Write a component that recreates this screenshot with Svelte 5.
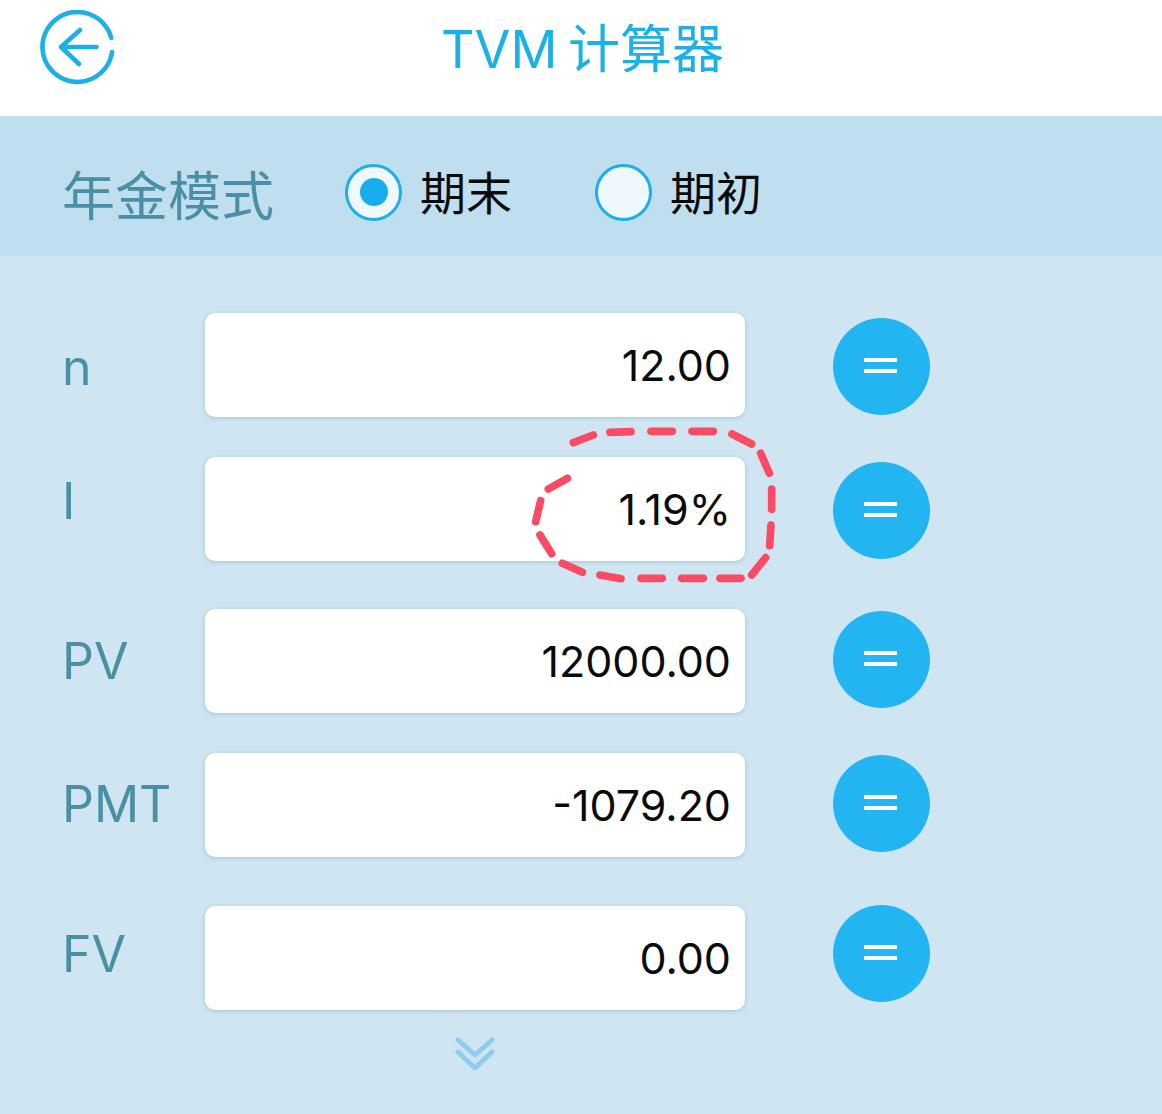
<script>
    // label / button nudges and the gap above each row, read off the reference
    const rows = [
        { label: "n", value: "12.00", nudge: 2, btn: 1, gap: 57 },
        { label: "I", value: "1.19%", nudge: -8, btn: 1, gap: 40 },
        { label: "PV", value: "12000.00", nudge: 0, btn: -2, gap: 48 },
        { label: "PMT", value: "-1079.20", nudge: -1, btn: -2, gap: 40 },
        { label: "FV", value: "0.00", nudge: -4, btn: -5, gap: 49 },
    ];

    // hand-traced dashes of the red annotation (viewBox units)
    const dashes = [
        [160, 98, 220, 75], [270, 67, 333, 65], [393, 64, 457, 64], [516, 64, 580, 64],
        [636, 72, 695, 102], [722, 130, 748, 190], [755, 237, 755, 298], [753, 345, 749, 407],
        [737, 443, 695, 495], [663, 505, 600, 505], [550, 505, 485, 505], [427, 505, 363, 505],
        [303, 506, 240, 495], [187, 487, 127, 460], [95, 431, 60, 375], [47, 335, 62, 272],
        [85, 237, 142, 205],
    ];
</script>

<div class="page">
    <header class="header">
        <svg class="back" viewBox="0 0 76 76" fill="none" aria-hidden="true">
            <path d="M72.3 28 A35 35 0 1 0 73.1 42" stroke="#1cb0e8" stroke-width="4.6" stroke-linecap="round" />
            <path d="M41 20 L22 37 L40 54 M22 37 H57.5" stroke="#1cb0e8" stroke-width="4.6" stroke-linecap="round" stroke-linejoin="round" />
        </svg>
        <h1 class="title">TVM 计算器</h1>
    </header>

    <section class="mode">
        <span class="mode-label">年金模式</span>
        <div class="option first">
            <span class="radio checked"></span>
            <span class="option-text">期末</span>
        </div>
        <div class="option">
            <span class="radio"></span>
            <span class="option-text">期初</span>
        </div>
    </section>

    <main class="form">
        {#each rows as row}
            <div class="row" style="margin-top: {row.gap}px">
                <span class="label" style="transform: translateY({row.nudge}px)">{row.label}</span>
                <div class="field">{row.value}</div>
                <button class="equals" style="transform: translateY({row.btn}px)" aria-label="计算 {row.label}"><span></span><span></span></button>
            </div>
        {/each}
        <svg class="more" viewBox="0 0 40 36" fill="none" aria-hidden="true">
            <path d="M3 4 L20 19 L37 4 M3 16 L20 32 L37 16" stroke="#8fcdee" stroke-width="5" stroke-linecap="round" stroke-linejoin="round" />
        </svg>
        <svg class="annotation" viewBox="0 0 840 570" aria-hidden="true">
            {#each dashes as d}
                <line x1={d[0]} y1={d[1]} x2={d[2]} y2={d[3]} />
            {/each}
        </svg>
    </main>
</div>

<style>
    :global(body) {
        margin: 0;
    }

    .page {
        width: 1162px;
        height: 1114px;
        overflow: hidden;
        background: #cfe5f1;
        font-family: Inter, "Noto Sans CJK SC", sans-serif;
    }

    .header {
        position: relative;
        height: 116px;
        background: #fff;
        display: flex;
        align-items: center;
        justify-content: center;
    }
    .back {
        position: absolute;
        left: 39px;
        top: 10px;
        width: 76px;
        height: 76px;
    }
    .title {
        margin: -26px 0 0 3px;
        font-size: 52px;
        font-weight: 400;
        color: #1cb0e8;
        word-spacing: -4px;
    }

    .mode {
        height: 140px;
        box-sizing: border-box;
        padding: 14px 0 0 62px;
        background: #bfdfef;
        display: flex;
        align-items: center;
    }
    .mode-label {
        font-size: 53px;
        color: #4a8fa5;
        width: 283px;
        flex-shrink: 0;
    }
    .option {
        display: flex;
        align-items: center;
        gap: 19px;
        color: #0a0a0a;
        font-size: 46px;
        margin-top: -2px;
    }
    .option.first {
        width: 250px;
    }
    .option-text {
        margin: -4px 0 0 -1px;
    }
    .radio {
        width: 51px;
        height: 51px;
        border: 3px solid #1cb0e8;
        border-radius: 50%;
        background: #eff8fd;
        display: flex;
        align-items: center;
        justify-content: center;
    }
    .radio.checked::after {
        content: "";
        width: 28px;
        height: 28px;
        border-radius: 50%;
        background: #18aeee;
    }

    .form {
        position: relative;
        display: flow-root;
    }
    .row {
        display: flex;
        align-items: center;
        padding-left: 62px;
    }
    .label {
        width: 143px;
        flex-shrink: 0;
        font-size: 50px;
        color: #4a8fa5;
    }
    .field {
        width: 540px;
        height: 104px;
        box-sizing: border-box;
        padding-right: 14px;
        background: #fff;
        border-radius: 10px;
        box-shadow: 0 1px 4px rgba(120, 170, 200, 0.55);
        display: flex;
        align-items: center;
        justify-content: flex-end;
        font-size: 43px;
        color: #0a0a0a;
    }
    .equals {
        width: 97px;
        height: 97px;
        margin-left: 88px;
        padding: 0 2px 2px 0;
        border: 0;
        border-radius: 50%;
        background: #23b5f1;
        display: flex;
        flex-direction: column;
        align-items: center;
        justify-content: center;
        gap: 7px;
    }
    .equals span {
        width: 33px;
        height: 4px;
        background: #fff;
    }
    .more {
        display: block;
        width: 40px;
        height: 36px;
        margin: 26px 0 0 455px;
    }
    .annotation {
        position: absolute;
        left: 520px;
        top: 154px;
        width: 280px;
        height: 190px;
        stroke: #fb4a64;
        stroke-width: 23;
        stroke-linecap: round;
    }
</style>
